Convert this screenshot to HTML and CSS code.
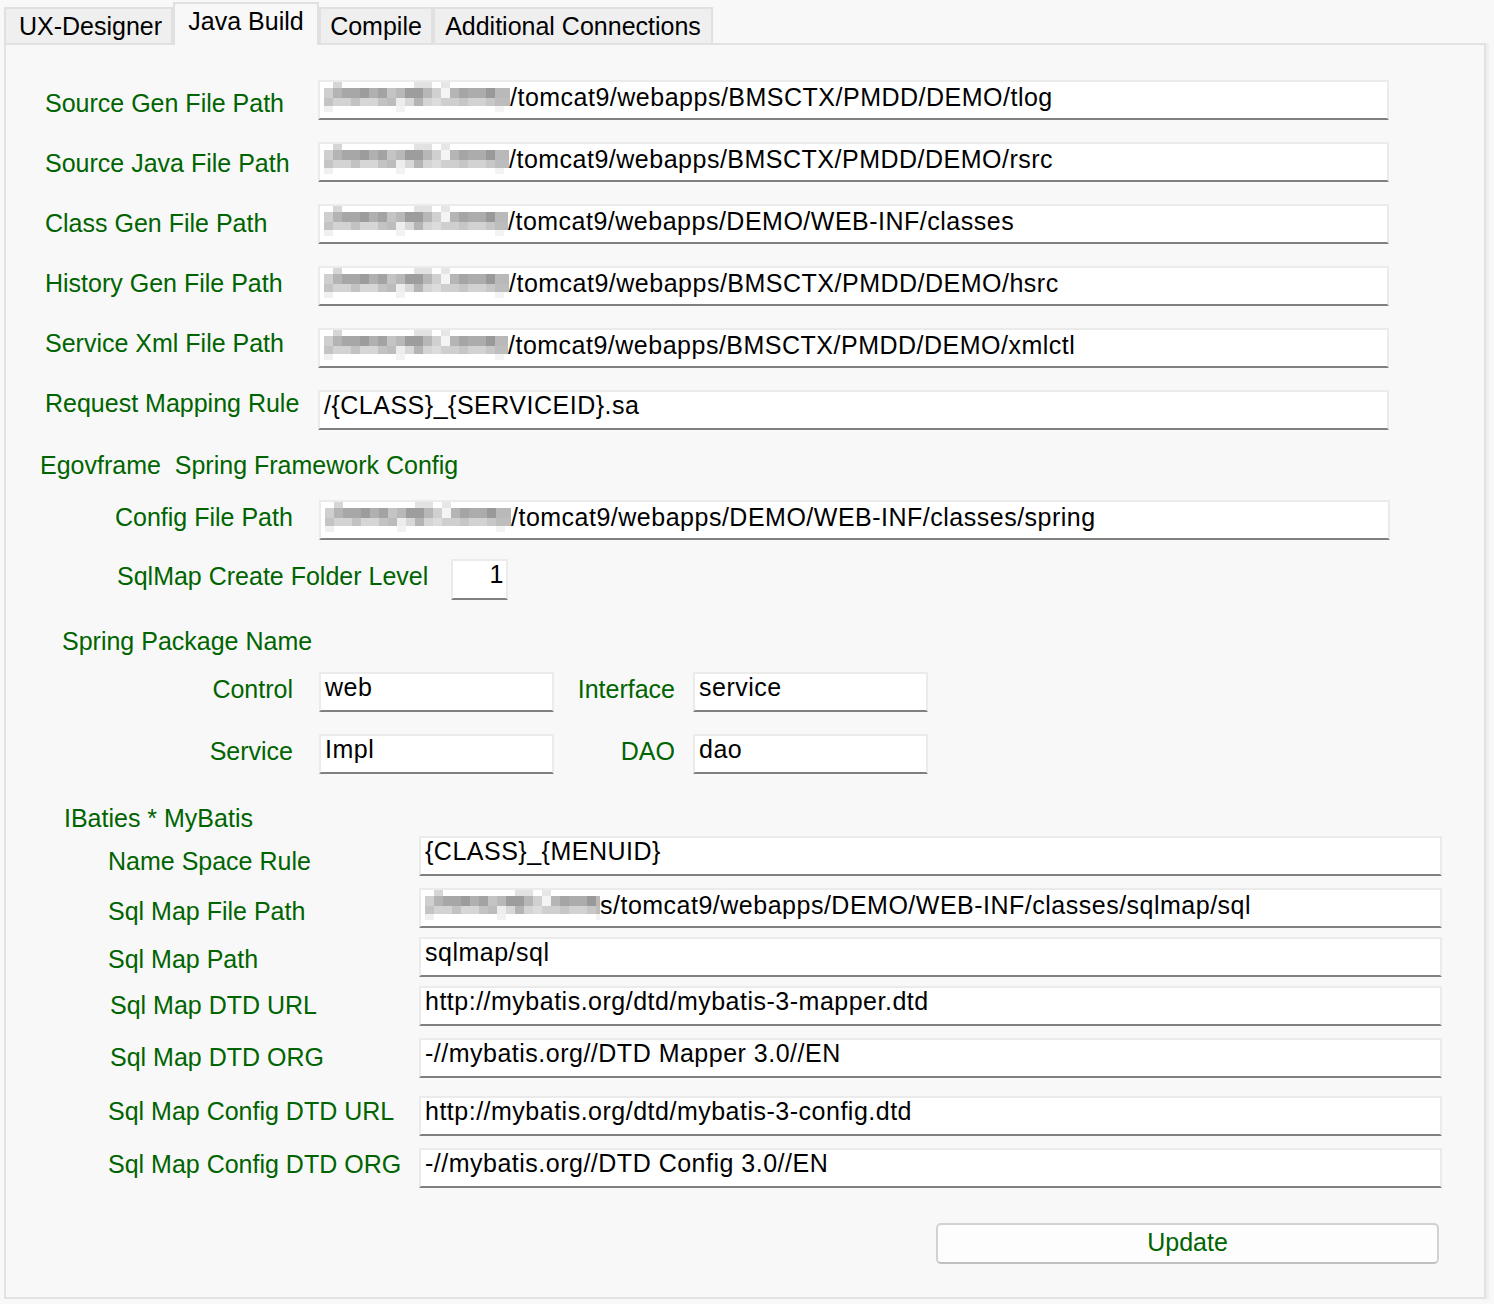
FILE: index.html
```html
<!DOCTYPE html>
<html lang="en">
<head>
<meta charset="utf-8">
<title>Java Build</title>
<link rel="stylesheet" href="styles.css">
</head>
<body>
<div class="tabs">
  <div class="tab t1">UX-Designer</div>
  <div class="tab t2 active">Java Build</div>
  <div class="tab t3">Compile</div>
  <div class="tab t4">Additional Connections</div>
</div>
<div class="panel">
  <div class="paths">
    <div class="row"><span class="lbl dn3">Source Gen File Path</span><div class="field wide"><span class="blur"></span>/tomcat9/webapps/BMSCTX/PMDD/DEMO/tlog</div></div>
    <div class="row"><span class="lbl dn1">Source Java File Path</span><div class="field wide"><span class="blur b2"></span>/tomcat9/webapps/BMSCTX/PMDD/DEMO/rsrc</div></div>
    <div class="row"><span class="lbl up1">Class Gen File Path</span><div class="field wide"><span class="blur b3"></span>/tomcat9/webapps/DEMO/WEB-INF/classes</div></div>
    <div class="row"><span class="lbl up3">History Gen File Path</span><div class="field wide"><span class="blur b2"></span>/tomcat9/webapps/BMSCTX/PMDD/DEMO/hsrc</div></div>
    <div class="row"><span class="lbl up5">Service Xml File Path</span><div class="field wide"><span class="blur b3"></span>/tomcat9/webapps/BMSCTX/PMDD/DEMO/xmlctl</div></div>
    <div class="row"><span class="lbl up7">Request Mapping Rule</span><div class="field wide">/{CLASS}_{SERVICEID}.sa</div></div>
  </div>

  <div class="heading egov">Egovframe&nbsp; Spring Framework Config</div>
  <div class="row config"><span class="lbl up3">Config File Path</span><div class="field wide"><span class="blur"></span>/tomcat9/webapps/DEMO/WEB-INF/classes/spring</div></div>
  <div class="row level"><span class="lbl up3">SqlMap Create Folder Level</span><div class="field num">1</div></div>

  <div class="heading pkg">Spring Package Name</div>
  <div class="pkg-grid">
    <span class="plbl">Control</span><div class="field small">web</div>
    <span class="plbl">Interface</span><div class="field small">service</div>
    <span class="plbl">Service</span><div class="field small">Impl</div>
    <span class="plbl">DAO</span><div class="field small">dao</div>
  </div>

  <div class="heading ibat">IBaties * MyBatis</div>
  <div class="mybatis">
    <div class="row r1"><span class="lbl dn5">Name Space Rule</span><div class="field long">{CLASS}_{MENUID}</div></div>
    <div class="row r2"><span class="lbl dn3">Sql Map File Path</span><div class="field long"><span class="blur short"></span>s/tomcat9/webapps/DEMO/WEB-INF/classes/sqlmap/sql</div></div>
    <div class="row r3"><span class="lbl dn2">Sql Map Path</span><div class="field long">sqlmap/sql</div></div>
    <div class="row r4"><span class="lbl up1 x2">Sql Map DTD URL</span><div class="field long">http://mybatis.org/dtd/mybatis-3-mapper.dtd</div></div>
    <div class="row r5"><span class="lbl up1 x2">Sql Map DTD ORG</span><div class="field long">-//mybatis.org//DTD Mapper 3.0//EN</div></div>
    <div class="row r6"><span class="lbl up5">Sql Map Config DTD URL</span><div class="field long">http://mybatis.org/dtd/mybatis-3-config.dtd</div></div>
    <div class="row r7"><span class="lbl up4">Sql Map Config DTD ORG</span><div class="field long">-//mybatis.org//DTD Config 3.0//EN</div></div>
  </div>

  <div class="actions"><button class="btn" type="button">Update</button></div>
</div>
</body>
</html>
```

FILE: styles.css
```css
* { box-sizing: border-box; }

html, body {
  margin: 0;
  padding: 0;
  background: #f8f8f8;
}

body {
  font-family: "Liberation Sans", Arial, sans-serif;
  font-size: 25px;
  color: #000;
  width: 1494px;
  height: 1304px;
  overflow: hidden;
}

/* ---------- tabs ---------- */
.tabs {
  display: flex;
  align-items: flex-end;
  height: 45px;
  padding-left: 4px;
  position: relative;
  z-index: 2;
}

.tab {
  height: 36px;
  line-height: 34px;
  text-align: center;
  background: #efefef;
  border: 2px solid #e0e0e0;
  border-bottom: none;
  margin-bottom: 2px;
  white-space: nowrap;
}
.t1 { width: 169px; padding-left: 4px; }
.t2 { width: 146px; }
.t3 { width: 114px; }
.t4 { width: 280px; }

.tab.active {
  height: 43px;
  line-height: 34px;
  background: #f8f8f8;
  margin-bottom: 0;
  padding-bottom: 6px;
}

/* ---------- panel ---------- */
.panel {
  margin-top: -2px;
  margin-left: 4px;
  width: 1482px;
  height: 1256px;
  border: 2px solid #e2e2e2;
  background: #f8f8f8;
  box-shadow: 3px 0 0 #efefef;
  position: relative;
  z-index: 1;
}

.row {
  display: flex;
  align-items: center;
  height: 40px;
}

.lbl, .plbl, .heading {
  color: #006400;
  white-space: nowrap;
}

.lbl { flex: none; }

/* label vertical nudges relative to the field centre */
.dn5 { padding-top: 10px; }
.dn3 { padding-top: 6px; }
.dn2 { padding-top: 4px; }
.dn1 { padding-top: 2px; }
.up1 { padding-bottom: 2px; }
.up3 { padding-bottom: 6px; }
.up4 { padding-bottom: 8px; }
.up5 { padding-bottom: 10px; }
.up7 { padding-bottom: 14px; }
.x2 { padding-left: 2px; }

/* input-like boxes */
.field {
  height: 40px;
  background: #fff;
  border: 2px solid #ebebeb;
  border-bottom-color: #808080;
  padding: 0 4px 10px 4px;
  line-height: 26px;
  letter-spacing: 0.5px;
  white-space: nowrap;
  overflow: hidden;
  flex: none;
}
.field.wide { width: 1071px; }
.field.long { width: 1023px; }
.field.small { width: 235px; }
.field.num {
  width: 57px;
  height: 41px;
  text-align: right;
  padding-right: 2px;
}

/* pixelated (blurred) prefix */
.blur {
  display: inline-block;
  width: 186px;
  height: 30px;
  vertical-align: -6px;
  background:
    linear-gradient(90deg, transparent 0 9px, #d6d6d6 9px 18px, transparent 18px 90px, #e2e2e2 90px 108px, transparent 108px 117px, #e6e6e6 117px 126px, transparent 126px) 0 0 / 100% 6px no-repeat,
    linear-gradient(90deg, #cfcfcf 0 9px, #b4b4b4 9px 18px, #a7a7a7 18px 36px, #9c9c9c 36px 45px, #b0b0b0 45px 54px, #a3a3a3 54px 63px, #c4c4c4 63px 72px, #b8b8b8 72px 81px, #9d9d9d 81px 99px, #b7b7b7 99px 108px, #d0d0d0 108px 117px, #f4f4f4 117px 126px, #b5b5b5 126px 135px, #a5a5a5 135px 144px, #acacac 144px 162px, #999999 162px 171px, #b9b9b9 171px 186px) 0 6px / 100% 10px no-repeat,
    linear-gradient(90deg, #c4c4c4 0 9px, #d3d3d3 9px 27px, #c2c2c2 27px 36px, #d6d6d6 36px 54px, #c3c3c3 54px 63px, #bcbcbc 63px 72px, #ededed 72px 81px, #d8d8d8 81px 90px, #b4b4b4 90px 99px, #d4d4d4 99px 108px, #dcdcdc 108px 117px, #cfcfcf 117px 135px, #c6c6c6 135px 144px, #d2d2d2 144px 162px, #c7c7c7 162px 171px, #bdbdbd 171px 186px) 0 16px / 100% 8px no-repeat,
    linear-gradient(90deg, #f0f0f0 0 9px, transparent 9px 72px, #f2f2f2 72px 81px, transparent 81px 171px, #f3f3f3 171px 180px, transparent 180px) 0 24px / 100% 6px no-repeat;
}
.blur.b2 { width: 185px; }
.blur.b3 { width: 184px; }
.blur.short { width: 175px; }

/* ---------- first group ---------- */
.paths {
  padding-top: 35px;
  padding-left: 39px;
  display: flex;
  flex-direction: column;
  gap: 22px;
}
.paths .lbl { width: 273px; }

.heading {
  height: 30px;
  line-height: 30px;
}
.heading.egov { margin-top: 20px; padding-left: 34px; }
.heading.pkg { margin-top: 26px; padding-left: 56px; }
.heading.ibat { margin-top: 29px; padding-left: 58px; }

.config { margin-top: 20px; padding-left: 109px; }
.config .lbl { width: 204px; }

.level { margin-top: 19px; padding-left: 111px; height: 41px; }
.level .lbl { width: 334px; }

/* ---------- spring package grid ---------- */
.pkg-grid {
  margin-top: 16px;
  display: grid;
  grid-template-columns: 287px 261px 121px 253px;
  row-gap: 22px;
  align-items: center;
}
.pkg-grid .plbl {
  text-align: right;
  padding-bottom: 6px;
}
.pkg-grid .field { width: 235px; height: 40px; }
.pkg-grid > :nth-child(2), .pkg-grid > :nth-child(6) { margin-left: 26px; }
.pkg-grid > :nth-child(4), .pkg-grid > :nth-child(8) { margin-left: 18px; }

/* ---------- mybatis ---------- */
.mybatis {
  padding-left: 102px;
  display: flex;
  flex-direction: column;
}
.mybatis .lbl { width: 311px; }
.mybatis .r1 { margin-top: 3px; }
.mybatis .r2 { margin-top: 12px; }
.mybatis .r3 { margin-top: 9px; }
.mybatis .r4 { margin-top: 9px; }
.mybatis .r5 { margin-top: 12px; }
.mybatis .r6 { margin-top: 18px; }
.mybatis .r7 { margin-top: 12px; }

/* ---------- update button ---------- */
.actions {
  display: flex;
  justify-content: flex-end;
  padding-right: 45px;
  margin-top: 35px;
}
.btn {
  width: 503px;
  height: 41px;
  background: #fdfdfd;
  border: 2px solid #d2d2d2;
  border-bottom-color: #c0c0c0;
  border-radius: 5px;
  color: #006400;
  font-family: "Liberation Sans", Arial, sans-serif;
  font-size: 25px;
  line-height: 30px;
  padding: 0 0 4px 0;
}
```
